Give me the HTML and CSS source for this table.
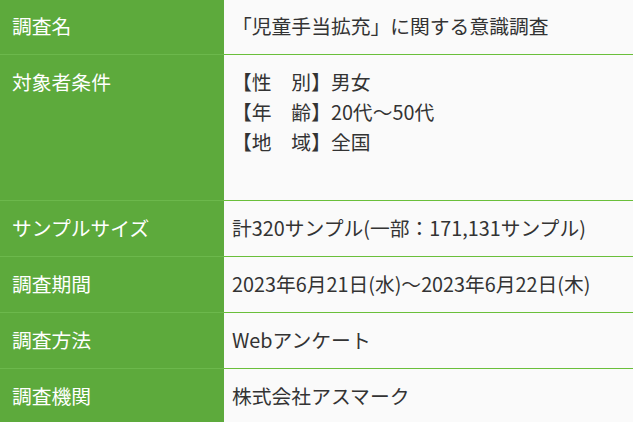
FILE: index.html
```html
<!DOCTYPE html>
<html lang="ja">
<head>
<meta charset="utf-8">
<link rel="stylesheet" href="styles.css">
</head>
<body>
<table class="spec">
  <tr class="first"><th>調査名</th><td>「児童手当拡充」に関する意識調査</td></tr>
  <tr><th>対象者条件</th><td>【性　別】男女<br>【年　齢】20代～50代<br>【地　域】全国<br>&nbsp;</td></tr>
  <tr><th>サンプルサイズ</th><td>計320サンプル(一部：171,131サンプル)</td></tr>
  <tr><th>調査期間</th><td>2023年6月21日(水)～2023年6月22日(木)</td></tr>
  <tr><th>調査方法</th><td>Webアンケート</td></tr>
  <tr><th>調査機関</th><td>株式会社アスマーク</td></tr>
</table>
</body>
</html>
```
FILE: styles.css
```css
html, body {
  margin: 0;
  padding: 0;
  background: #fafafa;
}
.spec {
  border-collapse: collapse;
  width: 633px;
  margin-top: -1px;
  font-family: "Noto Sans CJK JP", "Noto Sans", sans-serif;
  font-size: 19.8px;
  line-height: 30px;
}
.spec th {
  width: 212px;
  background: #5daa3c;
  color: #fff;
  font-weight: 400;
  text-align: left;
  vertical-align: top;
  padding: 12px 0 13px 12px;
  border-top: 1px solid #6cb84c;
  border-bottom: 1px solid #6cb84c;
}
.spec td {
  background: #fafafa;
  color: #333;
  vertical-align: top;
  padding: 12px 0 13px 8px;
  border-top: 1px solid #6abf3a;
  border-bottom: 1px solid #6abf3a;
}
.spec .first th,
.spec .first td {
  padding-top: 11px;
}
```
